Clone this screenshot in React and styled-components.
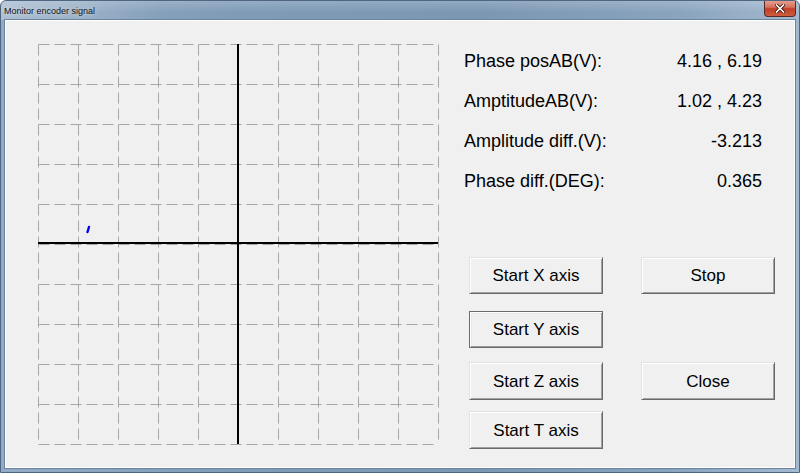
import React from "react";
import styled, { createGlobalStyle } from "styled-components";

const Global = createGlobalStyle`
  html, body { margin: 0; padding: 0; background: #ffffff; }
  body { width: 800px; height: 473px; overflow: hidden; font-family: "Liberation Sans", Arial, sans-serif; }
`;

const Frame = styled.div`
  width: 800px;
  height: 473px;
  box-sizing: border-box;
  display: flex;
  flex-direction: column;
  border: 1px solid #4f6681;
  border-radius: 6px 6px 0 0;
  background: linear-gradient(to right, #93abc4 0%, #7f9bb7 30%, #7b97b3 60%, #8aa4be 85%, #a3b9cf 100%);
  overflow: hidden;
`;

const TitleBar = styled.div`
  height: 19px;
  flex: none;
  display: flex;
  align-items: center;
  justify-content: space-between;
  padding-left: 3px;
  background: linear-gradient(to bottom, rgba(255,255,255,0.18), rgba(255,255,255,0) 60%),
    linear-gradient(to right, rgba(255,255,255,0.25) 0%, rgba(255,255,255,0) 20%);
`;

const Title = styled.span`
  font-family: "Liberation Sans", Arial, sans-serif;
  font-size: 9px;
  color: #151515;
  text-shadow: 0 0 4px rgba(255, 255, 255, 0.8);
  margin-top: 1px;
`;

const CloseButton = styled.div`
  width: 32px;
  height: 17px;
  margin-right: 3px;
  align-self: flex-start;
  margin-top: -1px;
  box-sizing: border-box;
  border: 1px solid #5a2a26;
  border-top: none;
  border-radius: 0 0 4px 4px;
  background: linear-gradient(to bottom, #e8a493 0%, #d5725d 45%, #c13e26 55%, #cf5d3f 100%);
  display: flex;
  align-items: center;
  justify-content: center;
`;

const Client = styled.div`
  flex: 1;
  margin: 0 4px 4px 4px;
  background: #f0f0f0;
  border: 1px solid #ffffff;
  box-shadow: 0 0 0 1px #6a84a0;
  display: flex;
  align-items: flex-start;
  padding: 20px 0 0 32px;
`;

const Plot = styled.svg`
  display: block;
  flex: none;
  margin-top: 3px;
`;

const RightPanel = styled.div`
  margin-left: 24px;
  width: 298px;
  display: flex;
  flex-direction: column;
`;

const InfoRow = styled.div`
  height: 40px;
  display: flex;
  align-items: center;
  justify-content: space-between;
  font-size: 18px;
  color: #000;
`;

const ButtonGrid = styled.div`
  margin-top: 56px;
  margin-left: 5px;
  display: grid;
  grid-template-columns: 134px 134px;
  column-gap: 38px;
  grid-template-rows: 54px 51px 49px 38px;
  align-items: start;
`;

const Button = styled.button`
  height: ${(p) => p.$h}px;
  width: 134px;
  box-sizing: border-box;
  padding: 1px 0 0 0;
  margin: 0;
  font-family: "Liberation Sans", Arial, sans-serif;
  font-size: 17px;
  color: #000;
  background: #f0f0f0;
  border: 1px solid;
  border-color: ${(p) => (p.$default ? "#6b6b6b" : "#e3e3e3 #696969 #696969 #e3e3e3")};
  box-shadow: ${(p) =>
    p.$default
      ? "inset 1px 1px #ffffff, inset -1px -1px #9a9a9a, inset 2px 2px #e8e8e8"
      : "inset 1px 1px #ffffff, inset -1px -1px #a0a0a0"};
  grid-column: ${(p) => p.$col};
  grid-row: ${(p) => p.$row};
  cursor: default;
`;

const info = [
  ["Phase posAB(V):", "4.16 , 6.19"],
  ["AmptitudeAB(V):", "1.02 , 4.23"],
  ["Amplitude diff.(V):", "-3.213"],
  ["Phase diff.(DEG):", "0.365"],
];

const buttons = [
  { label: "Start X axis", col: 1, row: 1, h: 37 },
  { label: "Stop", col: 2, row: 1, h: 37 },
  { label: "Start Y axis", col: 1, row: 2, h: 37, def: true },
  { label: "Start Z axis", col: 1, row: 3, h: 38 },
  { label: "Close", col: 2, row: 3, h: 38 },
  { label: "Start T axis", col: 1, row: 4, h: 38 },
];

function Scope() {
  const cells = 10;
  const size = 40;
  const o = 0.5;
  const lines = [];
  for (let i = 0; i <= cells; i++) {
    if (i === 5) continue;
    const p = i * size + o;
    lines.push(<line key={"v" + i} x1={p} y1={o} x2={p} y2={cells * size + o} />);
    lines.push(<line key={"h" + i} x1={o} y1={p} x2={cells * size + o} y2={p} />);
  }
  return (
    <Plot width="402" height="402" viewBox="0 0 402 402">
      <g stroke="#a6a6a6" strokeWidth="1" strokeDasharray="11 5" fill="none">
        {lines}
        <line x1={200.5} y1={o} x2={200.5} y2={400.5} />
        <line x1={o} y1={200.5} x2={400.5} y2={200.5} />
      </g>
      <g stroke="#000" strokeWidth="2">
        <line x1={200} y1={0} x2={200} y2={400} />
        <line x1={0} y1={199} x2={400} y2={199} />
      </g>
      <line x1={51} y1={183} x2={49.5} y2={188} stroke="#0000ff" strokeWidth="2.4" strokeLinecap="round" />
    </Plot>
  );
}

export default function App() {
  return (
    <>
      <Global />
      <Frame>
        <TitleBar>
          <Title>Monitor encoder signal</Title>
          <CloseButton>
            <svg width="10" height="9" viewBox="0 0 10 9">
              <path d="M1.5 1 L8.5 8 M8.5 1 L1.5 8" stroke="#3a1410" strokeWidth="3.2" strokeLinecap="square" />
              <path d="M1.5 1 L8.5 8 M8.5 1 L1.5 8" stroke="#ffffff" strokeWidth="1.6" strokeLinecap="square" />
            </svg>
          </CloseButton>
        </TitleBar>
        <Client>
          <Scope />
          <RightPanel>
            {info.map(([k, v]) => (
              <InfoRow key={k}>
                <span>{k}</span>
                <span>{v}</span>
              </InfoRow>
            ))}
            <ButtonGrid>
              {buttons.map((b) => (
                <Button key={b.label} $col={b.col} $row={b.row} $h={b.h} $default={b.def}>
                  {b.label}
                </Button>
              ))}
            </ButtonGrid>
          </RightPanel>
        </Client>
      </Frame>
    </>
  );
}
